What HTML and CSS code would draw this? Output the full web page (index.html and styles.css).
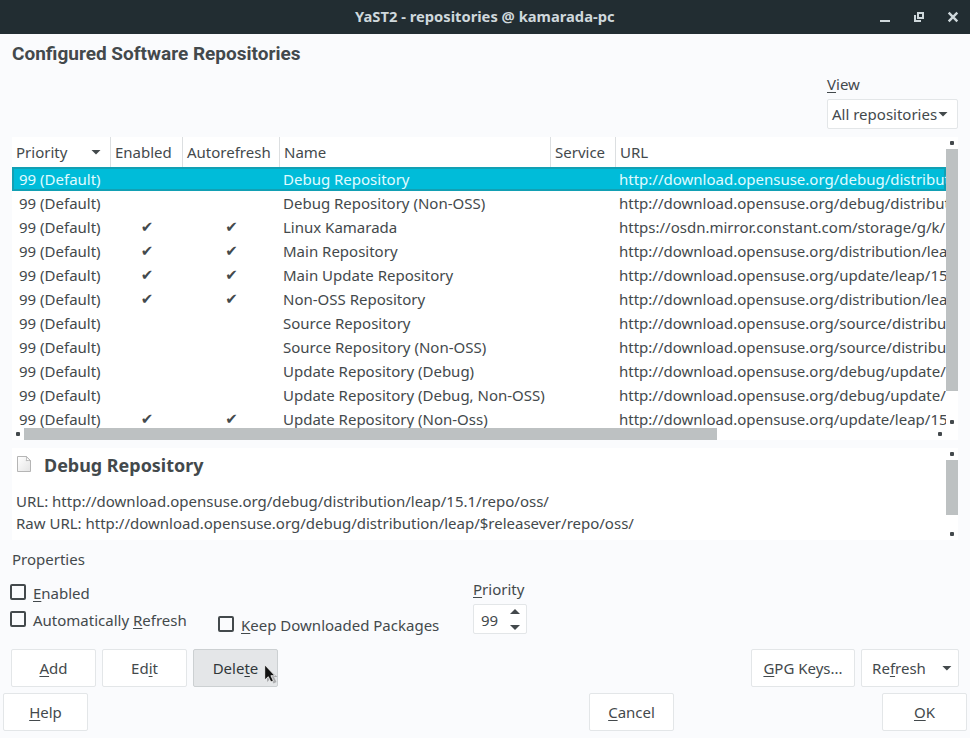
FILE: index.html
```html
<!DOCTYPE html>
<html lang="en">
<head>
<meta charset="utf-8">
<title>YaST2 - repositories @ kamarada-pc</title>
<link rel="stylesheet" href="styles.css">
</head>
<body>
<header class="titlebar">
  <h1 class="titlebar-text">YaST2 - repositories @ kamarada-pc</h1>
  <svg class="window-controls" width="90" height="34" viewBox="0 0 90 34">
    <path d="M0 20h10v2H0z"/>
    <path fill-rule="evenodd" d="M37 12h7v7h-7zM39 14v3h3v-3zM34 15h2v5h5v2h-7z"/>
    <path class="close" d="M68.7 12.7l8.6 8.6M77.3 12.7l-8.6 8.6"/>
  </svg>
</header>
<main class="dialog">
  <h2 class="heading">Configured Software Repositories</h2>
  <div class="view">
    <label class="view-label"><u>V</u>iew</label>
    <div class="combo"><span>All repositories</span><i class="arrow down"></i></div>
  </div>

  <section class="table">
    <div class="viewport">
      <div class="row head">
        <span class="sorted">Priority<i class="arrow down"></i></span><span>Enabled</span><span>Autorefresh</span><span>Name</span><span>Service</span><span>URL</span>
      </div>
      <div class="rows">
        <div class="row selected"><span>99 (Default)</span><span></span><span></span><span>Debug Repository</span><span></span><span>http://download.opensuse.org/debug/distribut</span></div>
        <div class="row"><span>99 (Default)</span><span></span><span></span><span>Debug Repository (Non-OSS)</span><span></span><span>http://download.opensuse.org/debug/distribut</span></div>
        <div class="row"><span>99 (Default)</span><span>✔</span><span>✔</span><span>Linux Kamarada</span><span></span><span>https://osdn.mirror.constant.com/storage/g/k/</span></div>
        <div class="row"><span>99 (Default)</span><span>✔</span><span>✔</span><span>Main Repository</span><span></span><span>http://download.opensuse.org/distribution/lea</span></div>
        <div class="row"><span>99 (Default)</span><span>✔</span><span>✔</span><span>Main Update Repository</span><span></span><span>http://download.opensuse.org/update/leap/15</span></div>
        <div class="row"><span>99 (Default)</span><span>✔</span><span>✔</span><span>Non-OSS Repository</span><span></span><span>http://download.opensuse.org/distribution/lea</span></div>
        <div class="row"><span>99 (Default)</span><span></span><span></span><span>Source Repository</span><span></span><span>http://download.opensuse.org/source/distribu</span></div>
        <div class="row"><span>99 (Default)</span><span></span><span></span><span>Source Repository (Non-OSS)</span><span></span><span>http://download.opensuse.org/source/distribu</span></div>
        <div class="row"><span>99 (Default)</span><span></span><span></span><span>Update Repository (Debug)</span><span></span><span>http://download.opensuse.org/debug/update/</span></div>
        <div class="row"><span>99 (Default)</span><span></span><span></span><span>Update Repository (Debug, Non-OSS)</span><span></span><span>http://download.opensuse.org/debug/update/</span></div>
        <div class="row"><span>99 (Default)</span><span>✔</span><span>✔</span><span>Update Repository (Non-Oss)</span><span></span><span>http://download.opensuse.org/update/leap/15</span></div>
      </div>
    </div>
    <div class="vscroll"><i class="dot"></i><b class="thumb table-thumb"></b><i class="dot"></i></div>
    <div class="hscroll"><i class="dot"></i><b class="thumb"></b><i class="dot"></i></div>
  </section>

  <section class="details">
    <div class="details-body">
      <div class="details-title">
        <svg width="16" height="18" viewBox="0 0 16 18">
          <defs><linearGradient id="paper" x1="0" y1="0" x2="1" y2="1"><stop offset="0" stop-color="#fff"/><stop offset="1" stop-color="#e4e4e4"/></linearGradient></defs>
          <path d="M1.5 1.5h8.7l4.3 4.2v10.8h-13z" fill="url(#paper)" stroke="#b5b5b5"/>
          <path d="M10.2 1.5c.5 1.500 .4 3 0 4.200 1.500-.4 3-.3 4.300 0z" fill="#fff" stroke="#a9a9a9" stroke-width=".8"/>
        </svg>
        <h3>Debug Repository</h3>
      </div>
      <p>URL: http://download.opensuse.org/debug/distribution/leap/15.1/repo/oss/</p>
      <p>Raw URL: http://download.opensuse.org/debug/distribution/leap/$releasever/repo/oss/</p>
    </div>
    <div class="vscroll"><i class="dot"></i><b class="thumb details-thumb"></b><i class="dot"></i></div>
  </section>

  <h4 class="section-label">Properties</h4>
  <section class="properties">
    <div class="checks">
      <label class="check"><i class="box"></i><span><u>E</u>nabled</span></label>
      <label class="check"><i class="box"></i><span>Automatically <u>R</u>efresh</span></label>
    </div>
    <label class="check keep"><i class="box"></i><span><u>K</u>eep Downloaded Packages</span></label>
    <div class="priority">
      <label><u>P</u>riority</label>
      <div class="spin"><span>99</span><div class="steps"><i class="arrow up"></i><i class="arrow down"></i></div></div>
    </div>
  </section>

  <div class="buttons actions">
    <button><span><u>A</u>dd</span></button>
    <button><span>Ed<u>i</u>t</span></button>
    <button class="pressed"><span>Dele<u>t</u>e</span>
      <svg class="pointer" width="18" height="24" viewBox="0 0 18 24">
        <path d="M3 4v14l4-3.500 2.500 5 3-1.400-2.500-5h3.500z" fill="#000" opacity=".25"/>
        <path d="M.7.800v15.200l3.600-3.300 2.600 5.300 2.500-1.200-2.500-5.100h4z" fill="#111" stroke="#fff" stroke-width=".8"/>
      </svg>
    </button>
    <button class="gpg"><span><u>G</u>PG Keys...</span></button>
    <button class="refresh"><span>Re<u>f</u>resh</span><i class="arrow down"></i></button>
  </div>
</main>
<footer class="buttons footer">
  <button><span><u>H</u>elp</span></button>
  <button class="cancel"><span><u>C</u>ancel</span></button>
  <button class="ok"><span><u>O</u>K</span></button>
</footer>
</body>
</html>
```
FILE: styles.css
```css
* { box-sizing: border-box; }
body {
  margin: 0;
  width: 970px;
  height: 738px;
  overflow: hidden;
  background: #fafbfd;
  color: #43494c;
  font: 15px/20px "Noto Sans", "DejaVu Sans", sans-serif;
}
h1, h2, h3, h4, p { margin: 0; font-weight: normal; font-size: inherit; }
i, b { display: block; flex: none; }
u {
  text-decoration: underline 1px;
  text-underline-offset: 2px;
  text-decoration-skip-ink: none;
}

.titlebar {
  display: flex;
  height: 34px;
  background: #222d32;
  color: #cfd8dc;
  padding-left: 355px;
}
.titlebar-text { font-weight: bold; font-size: 14.73px; line-height: 33px; white-space: nowrap; }
.window-controls { margin-left: auto; fill: #cfd8dc; }
.close { stroke: #cfd8dc; stroke-width: 2.4; }

.dialog { padding: 0 12px; }
.heading {
  height: 40px;
  font: bold 19px/40px Roboto, sans-serif;
}
.view { width: 131px; margin-left: auto; height: 63px; }
.view-label { display: block; height: 25px; line-height: 20px; }
.combo {
  display: flex;
  align-items: center;
  justify-content: space-between;
  height: 30px;
  padding: 0 9px 0 4px;
  background: #fff;
  border: 1px solid #e3e6e8;
  border-radius: 2px;
  white-space: nowrap;
}
.combo span { width: 106px; }

.arrow { width: 10px; height: 5px; background: #43494c; clip-path: polygon(0 0, 100% 0, 50% 100%); }
.arrow.up { clip-path: polygon(50% 0, 100% 100%, 0 100%); }

.table {
  display: grid;
  grid-template: 291px 12px / 934px 12px;
  background: #fff;
}
.viewport { overflow: hidden; }
.row {
  display: grid;
  grid-template-columns: 99px 72px 97px 271px 65px 330px;
  height: 24px;
  line-height: 24px;
  white-space: nowrap;
}
.row > span { padding-left: 3px; overflow: hidden; }
.row > span:first-child { padding-left: 7px; }
.rows .row > span:nth-child(2), .rows .row > span:nth-child(3) {
  padding: 0;
  text-align: center;
  font-family: "DejaVu Sans", sans-serif;
}
.head { height: 30px; line-height: 30px; }
.head > span, .head > span:first-child { padding-left: 4px; border-right: 1px solid #dcdfe1; }
.head > span:last-child { border: 0; }
.head .sorted { display: flex; align-items: center; justify-content: space-between; padding-right: 9px; }
.rows { height: 261px; overflow: hidden; }
.selected { background: #00bcd9; color: #e0fbff; box-shadow: inset 0 0 0 2px #12a0b4; }

.vscroll { display: flex; flex-direction: column; align-items: center; padding: 4px 0 4px; }
.vscroll .dot:last-child { margin-top: auto; }
.hscroll { display: flex; align-items: center; padding: 0 4px; }
.hscroll .dot:last-child { margin-left: auto; }
.dot { width: 4px; height: 4px; background: #43494c; border-radius: 1px; }
.thumb { background: #bdc1c2; }
.table-thumb { width: 12px; height: 242px; margin-top: 4px; }
.hscroll .thumb { width: 693px; height: 12px; margin-left: 4px; }
.details-thumb { width: 12px; height: 55px; margin-top: 4px; }

.details {
  display: grid;
  grid-template-columns: 934px 12px;
  height: 92px;
  margin-top: 8px;
  background: #fff;
}
.details-body { padding: 4px; line-height: 22px; }
.details-title { display: flex; height: 38px; }
.details-title svg { margin-top: 3px; }
.details-title h3 { margin-left: 12px; font-weight: bold; font-size: 17.95px; line-height: 26px; }

.section-label { margin-top: 9px; }
.properties { display: flex; height: 80px; }
.checks { width: 206px; padding-top: 13px; }
.check { display: flex; height: 27px; }
.checks .check { margin-left: -2px; }
.box { width: 16px; height: 16px; margin-top: 2px; border: 2px solid #43494c; border-radius: 2px; }
.check span { margin: 1px 0 0 7px; white-space: nowrap; }
.keep { width: 257px; padding-top: 45px; height: 70px; }
.priority { margin-left: -2px; padding-top: 10px; }
.spin {
  display: flex;
  width: 54px;
  height: 30px;
  margin-top: 5px;
  padding: 0 6px 0 7px;
  background: #fff;
  border: 1px solid #e3e6e8;
  border-radius: 2px;
  line-height: 30px;
  justify-content: space-between;
}
.steps { display: flex; flex-direction: column; justify-content: space-between; padding: 4px 0 3px; }

.buttons { display: flex; }
.buttons button {
  position: relative;
  display: flex;
  align-items: center;
  justify-content: center;
  width: 85px;
  height: 38px;
  padding: 0;
  background: #fff;
  border: 1px solid #e3e6e8;
  border-radius: 2px;
  color: inherit;
  font: inherit;
}
.actions { margin: 0 -1px; gap: 6px; }
.buttons .pressed { background: #e4e6e8; border-color: #ccd0d2; color: #30373a; }
.pointer { position: absolute; left: 70px; top: 14px; }
.buttons .gpg { width: 104px; margin-left: auto; }
.buttons .refresh { width: 98px; gap: 16px; padding-left: 4px; }
.footer { margin-top: 6px; padding: 0 3px; }
.cancel { margin-left: 501px; }
.ok { margin-left: auto; }
```
